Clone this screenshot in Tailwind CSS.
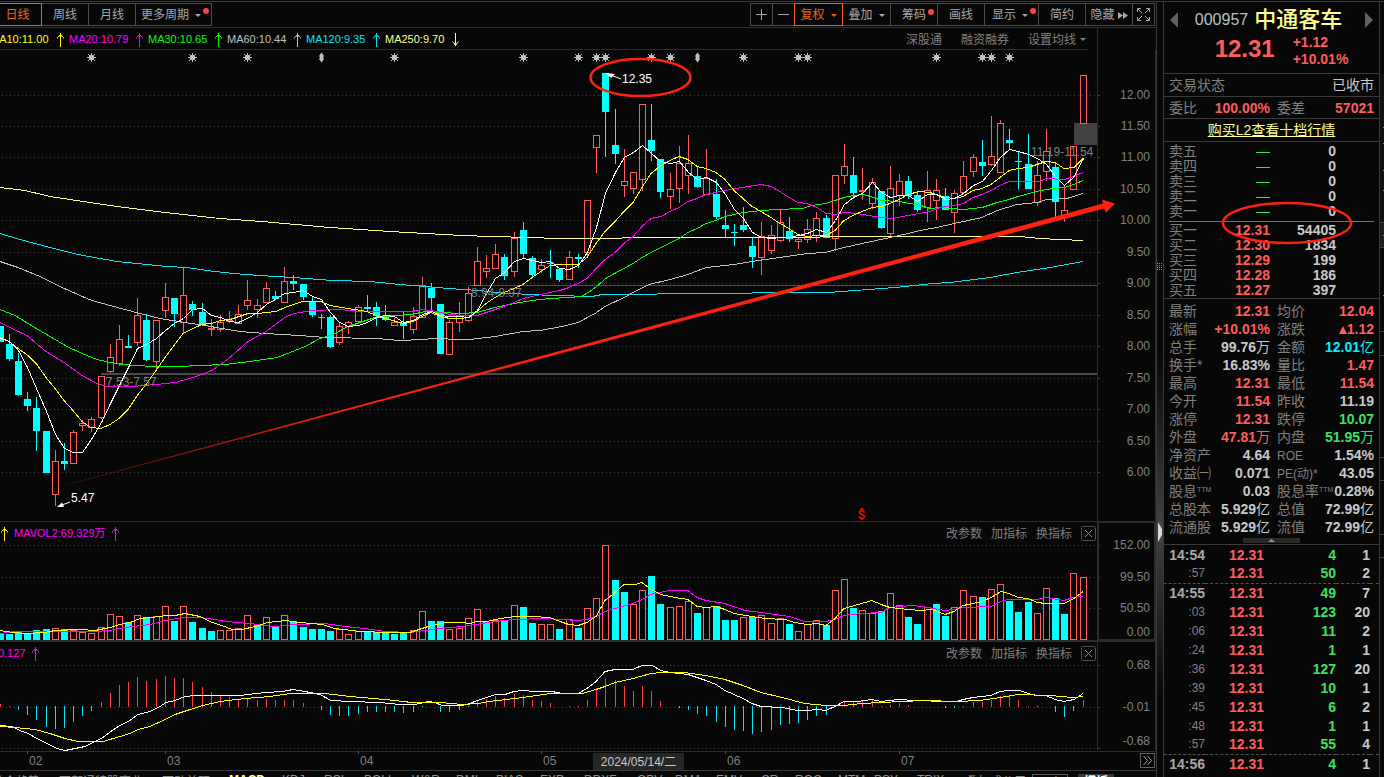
<!DOCTYPE html>
<html lang="zh-CN">
<head>
<meta charset="utf-8">
<title>中通客车 000957</title>
<script src="https://cdn.jsdelivr.net/npm/@tailwindcss/browser@4"></script>
</head>
<body class="bg-[#070707] text-[#a8a8a8] text-xs font-['Liberation_Sans','Noto_Sans_CJK_SC',sans-serif]">
<svg class="hidden">
  <defs>
    <symbol id="up" viewBox="0 0 7 14"><path d="M3.5 0V14M.5 5.5V4.5L3.5 1.5L6.5 4.5V5.5M2 3H5" fill="none" stroke="currentColor"/></symbol>
    <symbol id="down" viewBox="0 0 7 14"><path d="M3.5 0V13M.5 8.5L3.5 12L6.5 8.5M2 11H5" fill="none" stroke="currentColor"/></symbol>
    <symbol id="caret" viewBox="0 0 6 3"><path d="M0 0H6L3 3Z" fill="currentColor"/></symbol>
    <symbol id="close" viewBox="0 0 15 15"><rect x=".5" y=".5" width="14" height="14" rx="1" fill="none" stroke="#505050"/><path d="M4 4L11 11M11 4L4 11" stroke="#8c8c8c" fill="none"/></symbol>
  </defs>
</svg>
<div class="flex h-screen overflow-hidden pt-px">
  <main class="flex min-w-0 flex-1 flex-col border-t border-[#3a3a3a]">
    <div class="flex h-[26px] shrink-0 items-center justify-between border-b border-[#2c2c2c]">
      <nav class="flex h-[23px]">
        <button class="w-[42px] border border-l-0 border-[#f06414] pt-px pr-1.5 text-[#f06414]">日线</button>
        <button class="w-[47px] border border-l-0 border-[#484848] pt-px">周线</button>
        <button class="w-[47px] border border-l-0 border-[#484848] pt-px">月线</button>
        <button class="relative flex w-[76px] items-center gap-1.5 border border-l-0 border-[#484848] pt-px pl-[5px]">更多周期<svg class="h-[3px] w-1.5"><use href="#caret"/></svg><span class="absolute top-1 right-0.5 size-1.5 rounded-full bg-[#ff4040]"></span></button>
      </nav>
      <nav class="mr-px flex h-[23px] border-l border-[#484848]">
        <button aria-label="放大" class="flex w-[22px] items-center justify-center border border-l-0 border-[#484848]"><svg class="size-[11px]" viewBox="0 0 11 11"><path d="M5.5 0V11M0 5.5H11" stroke="currentColor"/></svg></button>
        <button aria-label="缩小" class="flex w-[21px] items-center justify-center border-y border-[#484848]"><svg class="size-[11px]" viewBox="0 0 11 11"><path d="M0 5.5H11" stroke="currentColor"/></svg></button>
        <button class="flex w-[49px] items-center justify-center gap-1.5 border border-[#f06414] pt-px text-[#f06414]">复权<svg class="h-[3px] w-1.5"><use href="#caret"/></svg></button>
        <button class="flex w-12 items-center justify-center gap-1.5 border border-l-0 border-[#484848] pt-px">叠加<svg class="h-[3px] w-1.5"><use href="#caret"/></svg></button>
        <button class="relative w-[47px] border border-l-0 border-[#484848] pt-px">筹码<span class="absolute top-[5px] right-[3px] size-1.5 rounded-full bg-[#ff4040]"></span></button>
        <button class="w-[47px] border border-l-0 border-[#484848] pt-px">画线</button>
        <button class="relative flex w-[54px] items-center gap-1.5 border border-l-0 border-[#484848] pt-px pl-[7px]">显示<svg class="h-[3px] w-1.5"><use href="#caret"/></svg><span class="absolute top-1 right-0.5 size-1.5 rounded-full bg-[#ff4040]"></span></button>
        <button class="w-[47px] border border-l-0 border-[#484848] pt-px">简约</button>
        <button class="flex w-[47px] items-center justify-center gap-[3px] border border-l-0 border-[#484848] pt-px">隐藏<svg class="h-[7px] w-[10px]" viewBox="0 0 10 7"><path d="M0 0L5 3.5L0 7ZM5 0L10 3.5L5 7Z" fill="currentColor"/></svg></button>
        <button aria-label="全屏" class="flex w-[22px] items-center justify-center border border-l-0 border-[#484848]"><svg class="size-[13px]" viewBox="0 0 13 13"><path d="M.5 4V.5H4M9 .5H12.5V4M12.5 9V12.5H9M4 12.5H.5V9M1 1L5 5M12 1L8 5M12 12L8 8M1 12L5 8" fill="none" stroke="currentColor"/></svg></button>
      </nav>
    </div>
    <div class="flex h-[22px] shrink-0">
      <div class="flex min-w-0 flex-1 items-center justify-between overflow-hidden border-b border-[#2c2c2c] pt-0.5 pr-0.5">
        <ul class="-ml-2.5 flex text-[11px]">
          <li class="flex w-[79px] items-center text-[#ffff00]"><span class="w-[67px]">MA10:11.00</span><svg class="h-3.5 w-[7px]"><use href="#up"/></svg></li>
          <li class="flex w-[79px] items-center text-[#ff00ff]"><span class="w-[67px]">MA20:10.79</span><svg class="h-3.5 w-[7px]"><use href="#up"/></svg></li>
          <li class="flex w-[79px] items-center text-[#00ff00]"><span class="w-[67px]">MA30:10.65</span><svg class="h-3.5 w-[7px]"><use href="#up"/></svg></li>
          <li class="flex w-[79px] items-center text-[#c0c0c0]"><span class="w-[67px]">MA60:10.44</span><svg class="h-3.5 w-[7px]"><use href="#up"/></svg></li>
          <li class="flex w-[79px] items-center text-[#00e5f5]"><span class="w-[67px]">MA120:9.35</span><svg class="h-3.5 w-[7px]"><use href="#up"/></svg></li>
          <li class="flex w-[79px] items-center text-[#ffff90]"><span class="w-[67px]">MA250:9.70</span><svg class="h-3.5 w-[7px]"><use href="#down"/></svg></li>
        </ul>
        <div class="flex items-center gap-[19px] text-[#808080]">
          <button>深股通</button><button>融资融券</button><button class="flex items-center gap-1">设置均线<svg class="h-[3px] w-1.5"><use href="#caret"/></svg></button>
        </div>
      </div>
      <div class="w-2.5 border-r border-[#2c2c2c]"></div>
      <div class="w-[58px]"></div>
    </div>
    <svg id="price" class="block w-full shrink-0" viewBox="0 50 1156 471" role="img" aria-label="日K线"></svg>
    <section class="relative shrink-0">
      <svg id="volume" class="block w-full" viewBox="0 521 1156 120" role="img" aria-label="成交量"></svg>
      <header class="absolute inset-x-0 top-1 flex h-[17px] items-center justify-between pr-[60px] text-[#808080]">
        <div class="flex items-center gap-1.5 pl-px text-[11px] text-[#ff00ff]"><svg class="h-3.5 w-[7px] text-[#ffff00]"><use href="#up"/></svg><span>MAVOL2:69.329万</span><svg class="h-3.5 w-[7px]"><use href="#up"/></svg></div>
        <div class="flex items-center gap-[9px]"><button>改参数</button><button>加指标</button><button>换指标</button><button aria-label="关闭"><svg class="size-[15px]"><use href="#close"/></svg></button></div>
      </header>
    </section>
    <section class="relative shrink-0">
      <svg id="macd" class="block w-full" viewBox="0 641 1156 110" role="img" aria-label="MACD"></svg>
      <header class="absolute inset-x-0 top-1 flex h-[17px] items-center justify-between overflow-hidden pr-[60px] text-[#808080]">
        <div class="-ml-0.5 flex items-center gap-1.5 text-[11px] text-[#ff00ff]"><span>0.127</span><svg class="h-3.5 w-[7px]"><use href="#up"/></svg></div>
        <div class="flex items-center gap-[9px]"><button>改参数</button><button>加指标</button><button>换指标</button><button aria-label="关闭"><svg class="size-[15px]"><use href="#close"/></svg></button></div>
      </header>
    </section>
    <section class="relative shrink-0">
      <svg id="dates" class="block w-full" viewBox="0 751 1156 19" role="img" aria-label="日期"></svg>
      <button aria-label="更多" class="absolute top-0.5 right-px flex size-[15px] items-center justify-center border border-[#606060]"><svg class="size-[9px]" viewBox="0 0 9 9"><path d="M.5 0L4.5 4.5L.5 9M4.5 0L8.5 4.5L4.5 9" fill="none" stroke="#a8a8a8"/></svg></button>
    </section>
    <nav class="flex h-6 shrink-0 items-start overflow-hidden border-t border-[#3a3a3a] pt-px leading-4 whitespace-nowrap text-[#909090]">
      <button class="mt-0.5 mr-2 -ml-2 w-[59px] text-left">综合趋势</button><button class="mt-0.5 w-[103px] text-left">西部通特股商业</button><button class="mt-0.5 w-[67px] text-left">百动首顶</button>
      <button class="w-[53px] text-left font-bold text-[#ffff90]">MACD</button><button class="w-[42px] text-left">KDJ</button><button class="w-10 text-left">RSI</button><button class="w-[48px] text-left">BOLL</button><button class="w-[44px] text-left">W&amp;R</button><button class="w-[40px] text-left">DMI</button><button class="w-[44px] text-left">BIAS</button><button class="w-[44px] text-left">EXP</button><button class="w-[53px] text-left">DDXF</button><button class="w-[38px] text-left">OBV</button><button class="w-[41px] text-left">DMA</button><button class="w-[45px] text-left">EMV</button><button class="w-[34px] text-left">CR</button><button class="w-[43px] text-left">ROC</button><button class="w-[36px] text-left">MTM</button><button class="w-[43px] text-left">PSY</button><button class="w-[49px] text-left">TRIX</button>
      <button class="mt-0.5 w-[66px] text-left">叠加或公用</button><button class="mt-0.5 w-9 border border-[#606060]">互点</button><button class="mt-0.5 ml-2.5 w-9 bg-[#383838] font-bold text-white">模板</button>
    </nav>
  </main>

  <div class="relative flex w-[7px] shrink-0 items-center border-t border-l border-[#3a3a3a] bg-linear-to-b from-[#070707] from-45% via-[#444] via-68% to-[#070707] to-90%">
    <svg class="absolute top-[261px] left-0 h-2 w-1.5" viewBox="0 0 6 8"><path d="M.5 0V8M2.5 0V8M4.5 0V8" stroke="#909090" stroke-dasharray="1 1"/></svg>
    <svg class="absolute top-[520px] left-px h-5 w-1" viewBox="0 0 4 20"><path d="M0 0L4 7V13L0 20Z" fill="#d8d8d8"/></svg>
  </div>

  <aside class="relative w-[217px] shrink-0 border-t border-x border-[#3a3a3a] text-sm leading-[18px] text-[#808080]">
    <div class="h-[71px] px-1.5 pt-1.5">
      <div class="flex h-6 items-center justify-between">
        <button aria-label="上一只"><svg class="h-4 w-2" viewBox="0 0 8 16"><path d="M8 0V16L0 8Z" fill="#606060"/></svg></button>
        <h1 class="flex items-center gap-1.5 pr-1.5"><span class="text-base text-[#b8c0c8]">000957</span><span class="text-[22px] font-medium text-[#ffff90]">中通客车</span></h1>
        <button aria-label="下一只"><svg class="h-4 w-2" viewBox="0 0 8 16"><path d="M0 0V16L8 8Z" fill="#606060"/></svg></button>
      </div>
      <div class="flex justify-center gap-[18px] pl-5 font-bold text-[#ff5c5c]"><span class="text-2xl leading-[34px]">12.31</span><span class="pt-0.5 leading-[17px]">+1.12<br>+10.01%</span></div>
    </div>
    <div class="flex h-[23px] items-center justify-between border-t border-[#3a3a3a] px-[5px]"><span>交易状态</span><span class="text-[#c8c8c8]">已收市</span></div>
    <div class="grid h-[22px] grid-cols-[101fr_97fr] items-center gap-[7px] border-t border-[#3a3a3a] px-[5px]"><div class="flex justify-between"><span>委比</span><b class="text-[#ff5c5c]">100.00%</b></div><div class="flex justify-between"><span>委差</span><b class="text-[#ff5c5c]">57021</b></div></div>
    <div class="flex h-[23px] items-center justify-center border-t border-[#3a3a3a]"><a href="#level2" class="text-[#ffff90] underline">购买L2查看十档行情</a></div>
    <div class="relative border-t border-[#3a3a3a] px-[5px] pt-0.5">
      <table class="w-full table-fixed leading-[15px]"><colgroup><col class="w-[30px]"><col class="w-[71px]"><col class="w-[66px]"><col></colgroup><tbody id="asks"></tbody></table>
      <div class="mt-0.5 h-px bg-[#707070]"></div>
      <table class="mt-px w-full table-fixed leading-[15px]"><colgroup><col class="w-[30px]"><col class="w-[71px]"><col class="w-[66px]"><col></colgroup><tbody id="bids"></tbody></table>
      <svg class="absolute top-[59px] left-[57px] h-[44px] w-[132px]" viewBox="0 0 132 44"><ellipse cx="66" cy="22" rx="64" ry="20" fill="none" stroke="#ff2010" stroke-width="2.5"/></svg>
    </div>
    <dl id="stats" class="grid grid-cols-[101fr_97fr] gap-x-[7px] border-t border-[#3a3a3a] px-[5px] pt-[3px]"></dl>
    <div class="flex h-2 justify-center pt-0.5"><button aria-label="收起" class="flex h-[5px] w-[57px] items-center justify-center bg-[#2a2a2a]"><svg class="h-[3px] w-[7px]" viewBox="0 0 7 3"><path d="M0 3H7L3.5 0Z" fill="#909090"/></svg></button></div>
    <div class="border-t border-[#3a3a3a]">
      <table class="w-full table-fixed border-collapse text-right font-bold"><colgroup><col class="w-[41px]"><col class="w-[59px]"><col class="w-[72px]"><col class="w-[34px]"><col></colgroup><tbody id="ticks"></tbody></table>
    </div>
  </aside>
  <div class="w-1 shrink-0 border-t border-[#3a3a3a]"><svg class="block h-[600px] w-1" viewBox="0 2 4 600"><rect y="74" width="4" height="148" fill="#111"/><rect y="222" width="4" height="25" fill="#1e1e1e"/><path d="M0 222.5H4M0 247.5H4M0 331.5H4M0 355.5H4M0 457.5H4M0 480.5H4M0 534.5H4M0 557.5H4" stroke="#404040"/><path d="M3 127.500H4M3 143.500H4M3 170.500H4M3 190.500H4M3 235.500H4M3 295.500H4" stroke="#909090"/></svg></div>
</div>

<script>
const RED = '#ff5c5c', CYAN = '#00ffff', GRID = '#464646', LINE = '#2c2c2c', LABEL = '#808080';
const xs = i => Math.floor(0.14 + 9.178 * i) + 0.5;

// Each candle: kind (r/c), high, body top, body bottom, low.
const candles = `c326,326,342,342 c334,344,359,361 c353,361,395,396 c392,399,406,411 c397,408,431,451 c431,431,473,473 r450,461,494,506 c443,461,464,470 r430,432,463,464 r420,423,425,431 r417,419,427,432 r376,376,417,419 r344,357,371,373 r325,339,363,366 c335,346,348,348 r298,315,342,346 c314,320,360,361 r320,320,361,369 r283,297,310,318 c298,298,314,327 r268,295,322,333 c301,304,310,316 c303,312,325,325 r319,328,329,336 r315,322,329,332 r311,320,321,323 r305,314,323,324 r280,300,305,310 r299,305,309,318 r282,288,302,303 c291,296,299,300 r267,281,302,303 c275,281,284,290 c284,284,297,300 c296,301,315,317 c314,317,318,329 c315,317,347,348 r323,326,342,345 r321,322,326,334 r305,307,321,323 c295,307,309,312 c302,307,316,326 c305,317,320,321 r318,322,325,325 c311,323,326,339 r307,316,329,334 r277,285,317,317 c283,288,298,311 c304,304,354,354 r320,322,354,354 r302,315,322,332 r287,293,320,322 r247,261,285,285 r255,268,271,278 r244,254,268,268 c254,257,276,280 r232,238,271,277 c222,230,254,259 c256,258,275,278 r259,265,269,273 c250,263,264,278 c269,269,280,282 r251,257,279,279 c254,257,259,268 r200,200,252,258 r135,135,147,173 c73,73,112,157 c109,145,154,164 r149,181,185,197 r172,172,188,194 r104,104,179,191 c104,140,151,161 c159,159,192,198 r173,189,196,209 r146,163,188,203 r135,163,175,194 c167,176,187,188 r149,178,194,194 c179,194,217,219 c210,225,229,237 c224,232,233,246 c207,225,230,232 c238,246,257,268 r222,236,257,275 r225,235,250,254 r210,222,240,242 c217,231,239,242 r238,239,241,249 r219,229,239,243 r212,218,235,242 c215,218,238,238 r175,175,238,251 r144,166,175,184 c157,175,193,199 r168,190,191,200 r178,182,203,209 c191,191,228,229 r166,188,233,236 r174,181,195,206 c176,181,196,199 c192,195,210,212 r171,190,207,222 r179,190,200,220 c188,196,210,210 r190,193,212,233 r161,176,192,192 r154,157,171,177 c140,162,166,176 r116,156,164,166 r120,123,172,172 c129,140,143,149 c152,161,162,189 c134,164,189,189 r161,175,202,206 r129,151,171,181 c163,167,202,218 r186,210,216,222 r146,146,189,189 r75,75,123,123`
  .split(' ').map(s => [s[0], ...s.slice(1).split(',').map(Number)]);

const ma5 = [338,341,350,367,388,411,434,448,452,452,439,422,403,385,367,348,344,338,330,323,318,309,308,315,317,321,322,318,312,304,299,293,292,290,296,299,312,322,326,325,322,317,315,316,322,320,314,311,315,316,316,317,310,293,278,272,261,258,260,262,261,268,269,265,252,227,193,172,157,152,145,153,161,163,161,172,179,177,182,194,209,218,232,237,238,237,237,235,233,229,232,220,204,197,193,182,192,197,195,195,201,194,194,199,198,193,185,181,170,157,149,151,154,158,164,176,185,177,158];
const ma10 = '0,337 9,341 18,348 28,355 37,364 46,377 55,388 64,400 73,410 82,421 91,427 101,428 110,424 119,418 128,409 138,394 146,384 156,370 165,357 174,345 183,333 193,328 202,324 211,323 221,320 230,319 239,316 248,313 257,313 267,312 276,311 285,307 293,304 303,301 321,301 330,305 348,308 367,311 376,315 385,318 404,323 413,321 422,316 431,312 440,316 450,318 460,318 469,317 477,311 486,303 495,297 504,292 514,288 523,284 532,277 541,271 550,265 560,264 578,264 587,257 596,243 605,231 615,221 624,211 633,202 642,187 651,173 661,165 670,160 679,156 688,159 697,166 706,168 716,172 725,179 734,190 743,198 752,206 761,211 771,217 780,223 789,228 798,234 807,236 817,235 826,235 835,230 844,220 853,215 862,211 872,207 881,206 890,203 899,199 908,194 919,191 930,192 945,197 954,198 963,196 973,190 982,188 991,184 1000,177 1009,170 1018,168 1028,167 1037,164 1046,161 1055,162 1064,168 1074,167 1083,158';
const ma20 = '0,322 14,329 27,335 46,351 64,362 82,375 97,383 107,386 132,386 156,384 175,382 193,377 212,370 230,357 248,341 266,331 285,317 294,313 312,310 340,309 360,311 385,311 412,311 422,309 432,310 450,314 462,315 477,315 486,312 495,309 504,306 514,302 523,298 532,296 541,294 550,292 560,290 569,287 578,283 587,278 596,268 605,259 615,252 624,243 633,236 642,226 651,218 661,216 670,211 679,207 688,201 697,198 706,194 716,192 725,190 742,187 761,184 771,186 780,191 789,197 798,202 807,203 817,207 826,213 835,214 844,212 857,213 875,216 892,218 908,215 919,213 930,211 940,207 954,205 963,203 973,197 982,194 991,190 1000,185 1009,181 1040,181 1046,178 1064,179 1074,176 1083,172';
const ma30 = '0,309 15,315 33,326 50,336 67,346 82,353 97,359 115,363 133,365 156,366 178,366 200,365 225,364 250,361 277,357 290,352 305,346 320,338 333,334 348,326 360,322 375,317 395,315 412,314 425,311 440,312 462,313 477,312 495,307 514,303 532,300 550,298 569,297 581,296 590,291 599,284 607,277 624,268 633,263 642,257 651,252 667,244 679,238 688,232 697,228 706,223 716,220 725,216 734,214 743,212 762,210 777,209 802,208 812,205 825,203 835,200 844,197 853,195 863,194 874,197 881,200 899,201 910,203 921,205 930,208 940,207 963,209 982,207 997,202 1009,199 1018,196 1037,191 1046,189 1064,187 1074,184 1083,180';
const ma60 = '0,261 18,267 40,276 60,286 80,295 92,300 110,305 125,309 140,313 160,318 185,322 205,325 222,328 240,331 265,333 300,335 325,337 377,338 400,340 423,339 433,338 462,339 470,339 495,336 523,331 540,330 562,326 578,322 595,313 605,306 624,297 635,291 649,284 670,279 688,274 706,267 734,264 752,261 780,257 807,253 825,252 844,247 862,243 890,237 908,233 920,230 937,227 954,223 982,217 997,210 1017,204 1037,202 1047,199 1067,198 1083,193';
const ma120 = '0,233 20,239 50,247 78,254 100,258 117,261 167,266 187,267 207,270 233,273 260,275 293,277 333,280 370,281 400,284 437,287 462,289 480,290 495,292 529,294 555,295 592,296 602,294 639,294 675,293 829,292 855,290 895,287 933,283 950,282 990,277 1017,272 1050,267 1083,261';
const ma250 = '0,187 25,190 50,196 90,202 117,206 165,212 220,218 262,221 330,227 390,231 462,235 492,236 529,237 559,238 615,238 629,237 718,237 729,237 812,237 829,236 924,236 1020,236 1040,238 1060,239 1083,240';

const volTop = [634,634,631,633,630,629,628,629,630,632,633,627,614,616,622,615,617,616,606,621,606,622,628,631,630,630,628,615,625,617,627,615,621,627,629,629,631,629,634,631,631,632,632,634,633,630,611,621,621,629,628,618,609,622,620,621,605,607,623,624,624,629,619,628,608,598,545,580,592,604,590,576,604,607,606,601,613,607,606,620,620,617,617,615,623,618,624,631,624,620,625,590,579,608,610,613,611,593,605,617,624,607,604,616,607,590,596,597,589,584,601,612,602,613,588,598,614,573,577];
// Days whose volume colour differs from the candle's own direction.
const volKind = {23:'c',28:'c',43:'c',53:'c',60:'r',66:'r',68:'c',81:'r',102:'c',116:'c'};
const vma5 = '0,630 13,632 25,633 45,632 55,630 80,629 95,630 110,627 120,624 130,622 140,618 150,617 160,616 166,615 175,615 185,613 200,616 212,622 222,625 232,629 242,629 255,626 268,622 285,620 300,622 322,624 335,628 360,631 390,632 410,632 428,626 446,622 462,622 470,623 477,621 487,621 495,619 514,616 532,616 550,617 560,621 569,624 578,625 587,622 596,616 605,600 615,592 624,584 635,584 642,582 651,589 661,594 675,597 688,599 697,606 706,607 716,606 725,609 734,613 752,616 765,618 785,619 795,622 807,624 817,623 826,625 835,618 844,608 858,604 872,600 881,604 890,607 899,608 920,610 932,609 945,614 954,611 963,605 973,603 982,601 991,597 1001,591 1009,593 1018,597 1028,598 1037,602 1046,603 1064,603 1074,598 1083,591';
const vma10 = '0,633 15,631 95,631 110,630 125,627 150,624 165,620 183,617 200,617 215,619 235,622 250,623 265,625 275,626 295,624 325,623 345,626 365,628 385,631 410,632 425,630 440,628 462,626 482,623 495,621 514,619 545,618 578,620 587,619 596,616 605,611 615,608 633,603 642,599 651,594 669,590 688,590 697,597 706,600 725,603 745,610 762,612 789,616 805,621 826,621 835,619 844,615 862,613 881,612 890,607 912,605 922,606 945,610 954,609 963,607 991,606 1003,600 1009,599 1037,599 1046,597 1064,600 1073,597 1083,596';

const hist = [704,706,-710,-715,-720,-727,-729,-728,-722,-716,-711,702,693,685,682,677,681,679,676,678,678,682,687,692,695,697,699,698,700,699,700,700,700,703,0,-710,-715,-716,-716,-714,-712,-712,-712,-712,-713,-712,-707,0,-712,-712,-710,-707,701,699,696,698,694,695,700,701,703,0,706,706,700,688,679,680,686,691,686,691,701,0,-708,-710,-714,-716,-722,-727,-730,-731,-734,-732,-730,-725,-724,-723,-720,-716,-715,-707,702,701,701,700,706,705,703,705,0,0,0,-708,-708,706,702,702,700,696,696,700,706,-707,0,-712,-717,-711,700];
const dif = '0,725 12,726 20,730 28,733 37,738 47,743 57,748 65,750 75,748 85,746 95,741 103,737 112,730 120,725 130,720 138,714 150,711 160,706 166,702 175,700 185,696 195,695 240,695 265,692 283,691 293,689 305,691 320,694 331,700 350,701 380,702 400,704 415,704 428,701 435,702 442,705 462,705 470,703 477,700 487,697 495,694 505,694 514,691 523,690 534,691 552,691 562,693 578,693 587,688 596,681 605,671 615,669 633,669 642,665 652,665 661,670 670,672 688,674 697,677 706,680 716,684 725,690 734,694 743,698 752,703 761,706 782,707 798,710 808,710 817,709 826,710 835,706 844,701 857,701 872,699 881,701 899,699 914,700 947,701 957,701 963,699 973,697 982,696 991,695 1000,691 1009,690 1020,690 1028,693 1037,695 1046,695 1055,699 1064,701 1074,699 1083,693';
const dea = '0,726 15,727 35,729 50,733 65,738 78,741 103,741 120,736 130,733 138,729 150,726 165,719 175,714 190,709 203,705 220,701 245,698 270,696 290,693 325,693 350,696 385,699 412,702 440,702 462,704 478,703 489,701 523,697 550,693 582,693 596,689 605,686 615,682 633,678 651,673 662,672 684,672 706,675 725,679 743,685 761,692 782,697 805,703 826,705 844,705 862,703 881,702 924,700 957,701 980,700 1000,697 1018,694 1050,695 1073,697 1083,696';

const poly = (pts, c) => `<polyline points="${pts}" transform="translate(0 .5)" fill="none" stroke="${c}" shape-rendering="crispEdges"/>`;
const dots = ys => ys.map(y => `<path d="M2 ${y}.5H1097" stroke="${GRID}" stroke-dasharray="1 3" shape-rendering="crispEdges"/><path d="M1098 ${y}.5H1100" stroke="${GRID}"/>`).join('');
const axis = rows => rows.map(([y, t]) => `<text x="1150" y="${y + 4}" text-anchor="end" font-size="12" fill="${LABEL}">${t}</text>`).join('');
const put = (id, html) => document.getElementById(id).innerHTML = html;

// Price pane
const priceYs = [95,126,157,189,220,252,283,315,346,378,409,441,472];
let s = dots(priceYs) + `<path d="M1097.500 50V521M1155.500 50V521" stroke="${LINE}"/>`;
s += axis(priceYs.map((y, i) => [y, (12 - i * 0.5).toFixed(2)]));
s += `<rect x="101" y="373" width="996" height="2" fill="#484848"/><path d="M468 285.500H1097" stroke="#505050"/><rect x="1074" y="123" width="23" height="22" fill="#424242"/>`;
candles.forEach(([k, h, t, b, l], i) => {
  const x = xs(i);
  s += k === 'c'
    ? `<path d="M${x} ${h}V${l}" stroke="${CYAN}" shape-rendering="crispEdges"/><rect x="${x - 3.5}" y="${t}" width="7" height="${Math.max(1, b - t)}" fill="${CYAN}"/>`
    : `<path d="M${x} ${h}V${t}M${x} ${b}V${l}" stroke="${RED}" shape-rendering="crispEdges"/><rect x="${x - 3}" y="${t + 0.5}" width="6" height="${Math.max(1, b - t)}" fill="none" stroke="${RED}" shape-rendering="crispEdges"/>`;
});
s += poly(ma250, '#ffff90') + poly(ma120, '#00e5f5') + poly(ma60, '#c0c0c0') + poly(ma30, '#00ff00') + poly(ma20, '#ff00ff') + poly(ma10, '#ffff00') + poly(ma5.map((y, i) => `${xs(i)},${y}`).join(' '), '#ffffff');
[91,192,247,394,523,578,596,605,651,670,743,798,807,936,982,991,1009].forEach(x => {
  s += `<g transform="translate(${x + 0.5} 57.5)" stroke="#c0c0c0"><rect x="-2.500" y="-2.500" width="5" height="5" fill="#c0c0c0" stroke="none"/><path d="M0-4.500V4.500M-4.500 0H4.500M-3.500-3.500L3.500 3.500M-3.500 3.500L3.500-3.500"/></g>`;
});
[321,697].forEach(x => s += `<path d="M${x + 0.5} 52.500L${x + 3} 56L${x + 2} 57.500L${x + 3} 59L${x + 0.5} 62.500L${x - 2} 59L${x - 1} 57.500L${x - 2} 56Z" fill="#c0c0c0"/>`);
s += `<g font-size="12" fill="${LABEL}"><text x="106" y="386">7.53-7.57</text><text x="471" y="297">8.94-8.97</text><text x="1031" y="156">11.19-11.54</text></g>
<g font-size="12" fill="#fff"><text x="71" y="502">5.47</text><text x="622" y="83">12.35</text></g>
<path d="M70 502L58 506.500M621 79L608 74" stroke="#fff"/><path d="M57 507L62 502.500L64 507ZM606 73L615 74L611 78Z" fill="#fff"/>
<g stroke="#ff0000" fill="none" stroke-width="1.500"><path d="M864.500 512.500C864 510.500 859.500 510.500 859.500 512.500S864.500 514.500 864.500 516.500S859.500 519 859 516.500"/></g><path d="M862 507.500L865 510.500H859ZM862 520.500L860 518.500H864Z" fill="#ff0000"/>
<defs><linearGradient id="fade" gradientUnits="userSpaceOnUse" x1="45" y1="0" x2="340" y2="0"><stop offset="0" stop-color="#ff2010" stop-opacity="0.1"/><stop offset="1" stop-color="#ff2010"/></linearGradient></defs>
<path d="M45 490.300L462 377.600L1103 203.500L1102 199.500L1115 203.500L1106 212.500L1104 208.500L462 379.700L45 491Z" fill="url(#fade)"/>
<ellipse cx="640.500" cy="77.500" rx="50" ry="18.500" fill="none" stroke="#ff2010" stroke-width="2.500"/>`;
put('price', s);

// Volume pane
s = dots([545, 577, 608]) + `<path d="M0 521.500H1156M0 640.500H1098" stroke="${LINE}"/><path d="M1156 522H1098V640H1156M1155 522V640" fill="none" stroke="${LINE}" stroke-width="2"/>`;
s += axis([[545, '152.00'], [577, '99.50'], [608, '50.50'], [632, '0.00']]);
volTop.forEach((y, i) => {
  const x = xs(i), k = volKind[i] || candles[i][0];
  s += k === 'c' ? `<rect x="${x - 3.5}" y="${y}" width="7" height="${640 - y}" fill="${CYAN}"/>`
    : `<rect x="${x - 3}" y="${y + 0.5}" width="6" height="${639 - y}" fill="#070707" stroke="${RED}" shape-rendering="crispEdges"/>`;
});
put('volume', s + poly(vma10, '#ff00ff') + poly(vma5, '#ffff00'));

// MACD pane
s = dots([665, 707, 748]) + `<path d="M0 641.500H1156M1097.500 642V750M1155.500 642V750" stroke="${LINE}"/>`;
s += axis([[665, '0.68'], [707, '-0.01'], [741, '-0.68']]);
hist.forEach((v, i) => {
  if (v) s += `<path d="M${xs(i)} ${v > 0 ? 707 : 706}V${Math.abs(v)}" stroke="${v > 0 ? '#ff4040' : '#00e5f5'}" shape-rendering="crispEdges"/>`;
});
put('macd', s + poly(dif, '#ffffff') + poly(dea, '#ffff00'));

// Date scale
s = `<path d="M0 751.500H1156" stroke="${LINE}"/>`;
[[27,'02'],[165,'03'],[358,'04'],[541,'05'],[725,'06'],[899,'07']].forEach(([x, t]) => s += `<path d="M${x}.500 751V754" stroke="#505050"/><text x="${x + 2}" y="765" font-size="12" fill="${LABEL}">${t}</text>`);
s += `<rect x="593" y="753" width="91" height="17" rx="1" fill="#262626"/><text x="638.500" y="766" font-size="12" text-anchor="middle" fill="#c8c8c8">2024/05/14/二</text>`;
put('dates', s);

// Order book
put('asks', ['五','四','三','二','一'].map(n => `<tr><td>卖${n}</td><td class="text-right text-[#3ce064]"><span class="inline-block h-px w-3.5 bg-[#3ce064] align-middle"></span></td><td class="text-right font-bold text-[#c8c8c8]">0</td><td></td></tr>`).join(''));
put('bids', [['一','12.31','54405'],['二','12.30','1834'],['三','12.29','199'],['四','12.28','186'],['五','12.27','397']].map(([n, p, v]) => `<tr><td>买${n}</td><td class="text-right font-bold text-[#ff5c5c]">${p}</td><td class="text-right font-bold text-[#c8c8c8]">${v}</td><td></td></tr>`).join(''));

// Statistics
const R = 'text-[#ff5c5c]', W = 'text-[#c8c8c8]', G = 'text-[#3ce064]', C = 'text-[#00f0ff]';
const ttm = '<sup class="absolute top-1 text-[7px] leading-none">TTM</sup>';
put('stats', [['最新','12.31',R],['均价','12.04',R],['涨幅','+10.01%',R],['涨跌','<svg class="inline-block size-2" viewBox="0 0 8 8"><path d="M0 8H8L4 0Z" fill="currentColor"/></svg>1.12',R],['总手','99.76<span class="font-normal">万</span>',W],['金额','12.01<span class="font-normal">亿</span>',C],['换手*','16.83%',W],['量比','1.47',R],['最高','12.31',R],['最低','11.54',R],['今开','11.54',R],['昨收','11.19',W],['涨停','12.31',R],['跌停','10.07',G],['外盘','47.81<span class="font-normal">万</span>',R],['内盘','51.95<span class="font-normal">万</span>',G],['净资产','4.64',W],['<span class="text-xs">ROE</span>','1.54%',W],['收益㈠','0.071',W],['<span class="text-xs">PE(动)*</span>','43.05',W],['股息' + ttm,'0.03',W],['股息率' + ttm,'0.28%',W],['总股本','5.929<span class="font-normal">亿</span>',W],['总值','72.99<span class="font-normal">亿</span>',W],['流通股','5.929<span class="font-normal">亿</span>',W],['流值','72.99<span class="font-normal">亿</span>',W]]
  .map(([k, v, c]) => `<div class="relative flex h-[18px] justify-between whitespace-nowrap"><dt>${k}</dt><dd class="font-bold ${c}">${v}</dd></div>`).join(''));

// Trade ticks
put('ticks', [['14:54',4,1],[':57',50,2],['14:55',49,7],[':03',123,20],[':06',11,2],[':24',1,1],[':36',127,20],[':39',10,1],[':45',6,2],[':48',1,1],[':57',55,4],['14:56',4,1]]
  .map(([t, v, n], i) => `<tr class="h-[19px] ${i && t[0] === '1' ? 'border-t border-dashed border-[#505050]' : ''}"><td class="${t[0] === ':' ? 'text-xs font-normal' : 'text-[#a8a8a8]'}">${t}</td><td class="text-[#ff5c5c]">12.31</td><td class="text-[#3ce064]">${v}</td><td class="text-[#c8c8c8]">${n}</td><td></td></tr>`).join(''));
</script>
</body>
</html>
